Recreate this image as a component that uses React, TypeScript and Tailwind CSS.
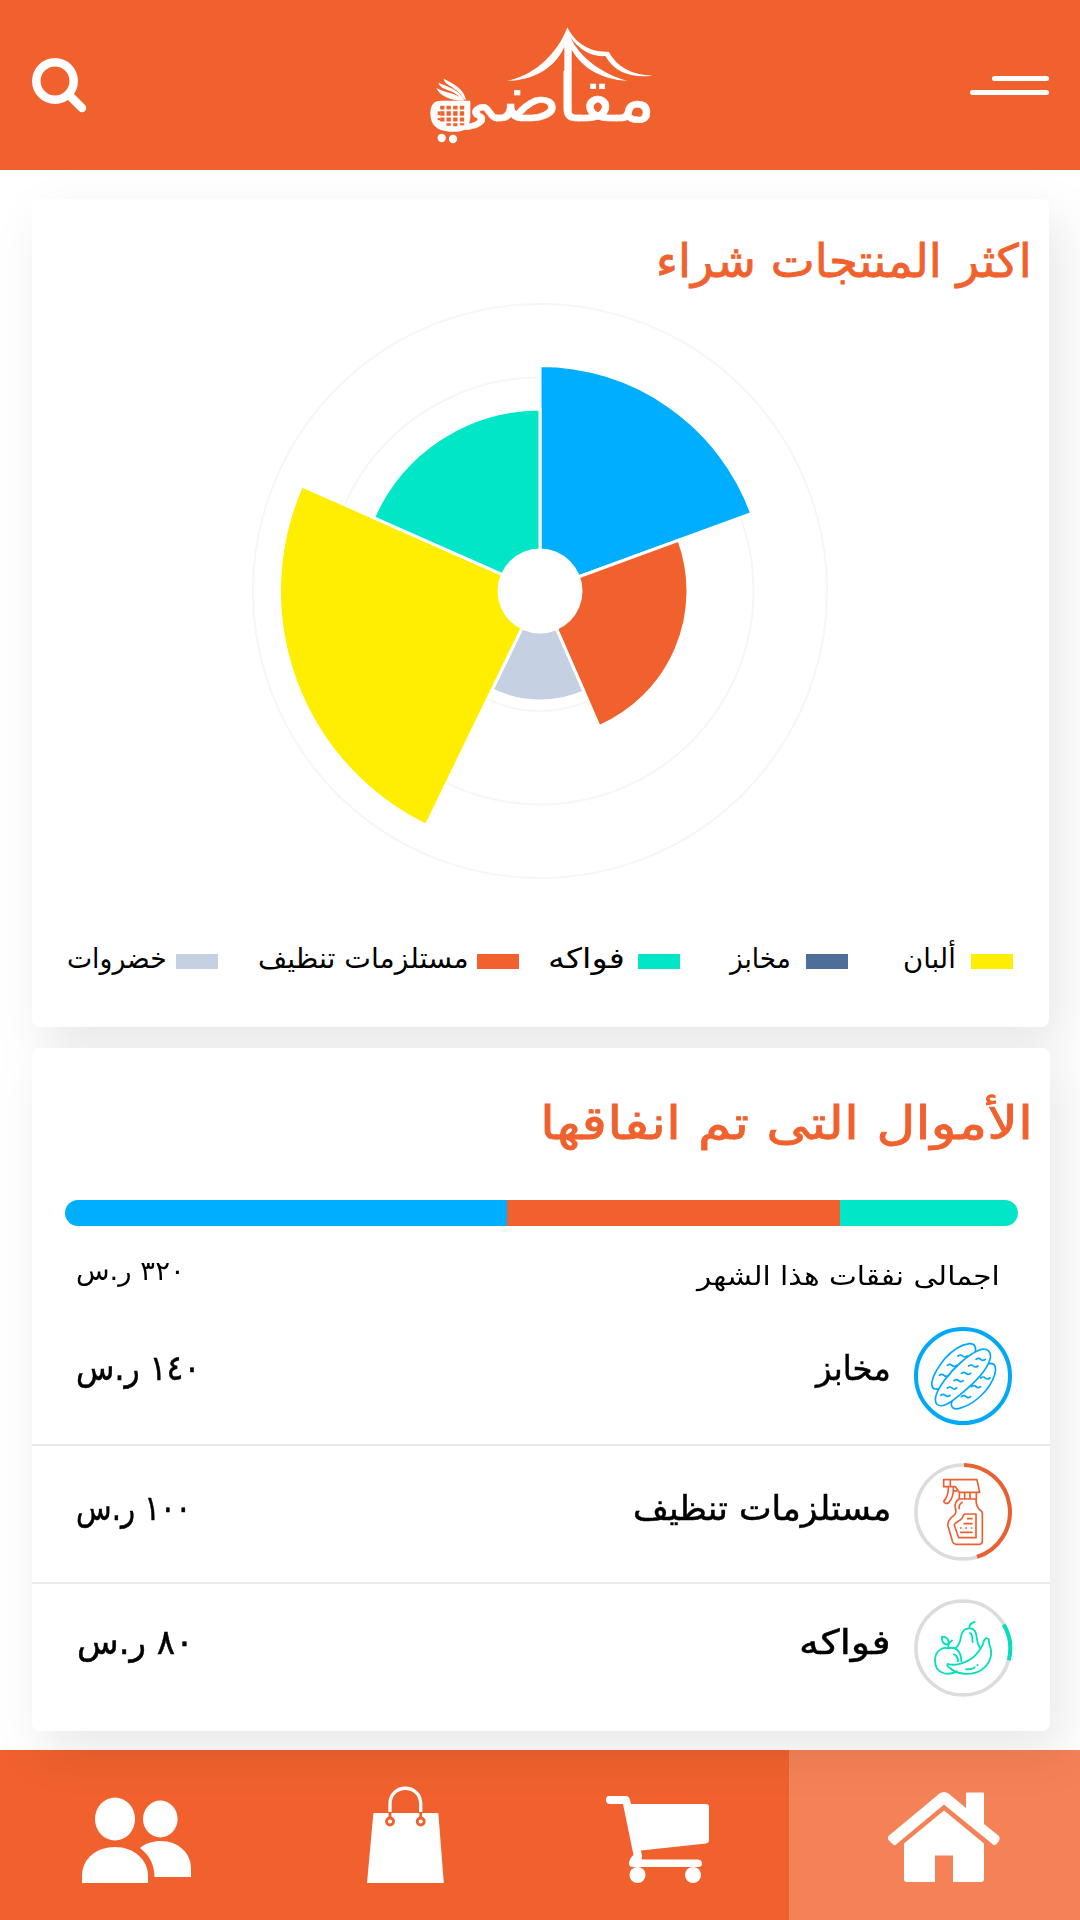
import { useLayoutEffect, useRef, useState, type ReactNode } from "react";

/** One line of Arabic text, condensed or stretched to fill the width of its box. */
function Fit({ children, className = "" }: { children: ReactNode; className?: string }) {
  const box = useRef<HTMLDivElement>(null);
  const line = useRef<HTMLSpanElement>(null);
  const [ratio, setRatio] = useState(1);
  useLayoutEffect(() => {
    if (box.current && line.current && line.current.offsetWidth) {
      setRatio(box.current.clientWidth / line.current.offsetWidth);
    }
  }, [children]);
  return (
    <div ref={box} dir="rtl" className={"shrink-0 " + className}>
      <span
        ref={line}
        className="inline-block origin-right whitespace-nowrap"
        style={{ transform: `scaleX(${ratio})` }}
      >
        {children}
      </span>
    </div>
  );
}

function Logo() {
  return (
    <svg viewBox="0 0 840 510" className="h-[170px] w-[280px]" fill="#fff">
      <path d="M499 82C470 160 402 226 318 243C412 240 468 192 490 140V330L512 340V150C545 205 600 238 680 243C600 222 535 170 508 112C535 150 572 172 613 168C642 218 690 234 755 227C690 224 648 200 623 155C565 158 522 128 499 82Z" />
      <g stroke="#fff" strokeWidth="1.500" className="font-['DejaVu_Sans'] text-[198px]">
        <text x="764" y="363" direction="rtl" textLength="296" lengthAdjust="spacingAndGlyphs">
          مقا
        </text>
        <text x="480" y="363" direction="rtl" textLength="380" lengthAdjust="spacingAndGlyphs">
          ضي
        </text>
      </g>
      <path d="M130 396H215V432H130Z" fill="#f0612e" />
      <path d="M195 301C190 270 165 254 128 236C130 258 165 256 189 298Z" />
      <path d="M190 301C172 268 150 264 112 248C120 274 158 264 184 300Z" />
      <path d="M190 302C168 278 140 282 106 264C118 290 150 302 190 302Z" />
      <path d="M120 302H208V350Q206 395 165 395H145Q88 392 88 340Q88 302 120 302Z" />
      <path d="M124 317V368M143 317V377M163 317V379M183 317V376" fill="none" stroke="#f0612e" strokeWidth="13" />
      <path d="M110 334H117V346H110ZM110 354H117V361H110Z" fill="#f0612e" />
      <path d="M100 331H196M100 350H196M104 367H196" fill="none" stroke="#fff" strokeWidth="5" />
      <circle cx="122" cy="414" r="12.500" />
      <circle cx="156" cy="417" r="12.500" />
    </svg>
  );
}

const CX = 288;
const slices = [
  { from: 0, to: 69.9, r: 225.5, color: "#00aeff" },
  { from: 69.9, to: 156.4, r: 148, color: "#f0612e" },
  { from: 156.4, to: 205.9, r: 110, color: "#c5d1e2" },
  { from: 205.9, to: 293.8, r: 260.5, color: "#ffee00" },
  { from: 293.8, to: 360, r: 182, color: "#02e6c8" },
];

function polar(r: number, deg: number) {
  const a = (deg * Math.PI) / 180;
  return `${(CX + r * Math.sin(a)).toFixed(2)} ${(CX - r * Math.cos(a)).toFixed(2)}`;
}

function RoseChart() {
  return (
    <svg viewBox="0 0 576 576" className="mt-[14px] ml-[220px] block size-[576px]">
      {[120, 213.5, 287].map((r) => (
        <circle key={r} cx={CX} cy={CX} r={r} fill="none" stroke="#f6f6f6" strokeWidth="2" />
      ))}
      {slices.map((s) => (
        <path
          key={s.from}
          d={`M${CX} ${CX}L${polar(s.r, s.from)}A${s.r} ${s.r} 0 0 1 ${polar(s.r, s.to)}Z`}
          fill={s.color}
          stroke="#fff"
          strokeWidth="3"
        />
      ))}
      <circle cx={CX} cy={CX} r="42.500" fill="#fff" />
    </svg>
  );
}

function BreadRing() {
  return (
    <svg viewBox="939 78 300 300" className="size-[100px] shrink-0" fill="#fff" stroke="#00a8fa" strokeWidth="5" strokeLinecap="round" strokeLinejoin="round">
      <circle cx="1089" cy="228" r="141" strokeWidth="12" />
      <path d="M996 258C992 236 1012 204 1034 176C1058 150 1086 134 1108 131C1126 130 1130 144 1124 162C1116 190 1060 244 1024 264C1010 270 998 268 996 258Z" />
      <path d="M1054 312C1056 290 1086 258 1108 236C1130 212 1154 192 1172 190C1186 190 1190 204 1184 224C1170 268 1128 308 1088 322C1070 330 1054 328 1054 312Z" />
      <path d="M1010 312C1000 298 1012 270 1034 240C1062 202 1104 164 1138 150C1162 142 1176 156 1170 178C1160 216 1118 254 1078 286C1056 304 1028 328 1010 312Z" />
      <path fill="none" d="M1074 168q8 -6 14 0t14 0M1042 196q8 -6 14 0t14 0M1018 226q8 -6 14 0t14 0M1128 178q8 -6 14 0t14 0M1106 198q8 -6 14 0t14 0M1084 220q8 -6 14 0t14 0M1062 242q8 -6 14 0t14 0M1042 264q8 -6 14 0t14 0M1022 286q8 -6 14 0t14 0M1142 234q8 -6 14 0t14 0M1114 260q8 -6 14 0t14 0M1084 290q8 -6 14 0t14 0" />
    </svg>
  );
}

function SprayRing() {
  return (
    <svg viewBox="939 486 300 300" className="size-[100px] shrink-0" fill="none" stroke="#eb6030" strokeWidth="5" strokeLinejoin="round">
      <circle cx="1089" cy="636" r="141" stroke="#dcdcdc" strokeWidth="11" />
      <path d="M1092 495A141 141 0 0 1 1131 770.500" strokeWidth="12" />
      <path d="M1031 539H1131L1139 577H1078L1066 560H1031ZM1051 539V560" />
      <path d="M1045 560Q1046 588 1031 604Q1036 614 1046 608Q1062 592 1060 560M1060 572L1072 574" />
      <path d="M1078 577V597H1129V577M1094 579V596M1110 579V596" />
      <path d="M1078 597Q1062 606 1066 624Q1070 636 1064 644Q1040 662 1044 678L1058 726Q1061 733 1068 733H1138Q1147 733 1147 724V640Q1147 634 1140 630Q1128 620 1128 597" />
      <path d="M1078 628Q1074 614 1088 606" />
      <path d="M1094 642H1128V713H1076L1063 676Q1062 672 1068 668Q1088 658 1090 646Z" />
      <path d="M1101 656H1118M1090 671H1118M1080 697H1118" />
      <path d="M1080 684H1085M1096 684H1101M1112 684H1117" />
    </svg>
  );
}

function FruitRing() {
  return (
    <svg viewBox="939 894 300 300" className="size-[100px] shrink-0" fill="none" stroke="#02dfb9" strokeWidth="5.500" strokeLinecap="round" strokeLinejoin="round">
      <circle cx="1089" cy="1044" r="141" stroke="#dcdcdc" strokeWidth="11" />
      <path d="M1211 973.500A141 141 0 0 1 1226.500 1080.500" strokeWidth="12" strokeLinecap="butt" />
      <path d="M1070 1114C1040 1130 1005 1118 1005 1082C1005 1052 1028 1040 1044 1045C1066 1038 1084 1052 1084 1084" />
      <path d="M1045 1044C1044 1036 1048 1026 1056 1022M1046 1034C1030 1034 1024 1024 1026 1010C1040 1010 1048 1018 1046 1034" />
      <path d="M1068 1043C1084 1030 1080 1014 1086 1000C1094 982 1118 980 1126 996C1134 1012 1126 1024 1140 1044M1108 984C1108 974 1114 968 1124 966" />
      <path d="M1110 999C1120 1004 1116 1018 1118 1026" />
      <path d="M1044 1092C1060 1098 1102 1092 1128 1064C1142 1048 1150 1034 1152 1022L1158 1014L1166 1017L1168 1034C1180 1060 1172 1092 1144 1110C1112 1130 1068 1122 1050 1104C1042 1100 1040 1092 1044 1092Z" />
      <path d="M1062 1063C1072 1068 1074 1076 1074 1084M1098 1108C1110 1108 1120 1106 1124 1102M1132 1096L1133 1095" />
    </svg>
  );
}

const legend = [
  { label: "ألبان", swatch: "bg-[#ffee00] w-[42px]", text: "w-[53px] mr-[15px]", gap: "" },
  { label: "مخابز", swatch: "bg-[#4d6e99] w-[42px]", text: "w-[61px] mr-[15px]", gap: "mr-[55px]" },
  { label: "فواكه", swatch: "bg-[#02e6c8] w-[42px]", text: "w-[77px] mr-[13px]", gap: "mr-[50px]" },
  { label: "مستلزمات تنظيف", swatch: "bg-[#f0612e] w-[42px]", text: "w-[211px] mr-[8px]", gap: "mr-[29px]" },
  { label: "خضروات", swatch: "bg-[#c5d1e2] w-[42px]", text: "w-[100px] mr-[9px]", gap: "mr-[40px]" },
];

const rows = [
  {
    label: "مخابز",
    amount: "١٤٠ ر.س",
    icon: <BreadRing />,
    row: "h-[138px] border-b-2",
    name: "w-[75px] pb-[16px]",
    sum: "w-[124px] pb-[16px]",
  },
  {
    label: "مستلزمات تنظيف",
    amount: "١٠٠ ر.س",
    icon: <SprayRing />,
    row: "h-[138px] border-b-2 pb-[4px]",
    name: "w-[258px] pb-[8px]",
    sum: "w-[115px] pb-[8px]",
  },
  {
    label: "فواكه",
    amount: "٨٠ ر.س",
    icon: <FruitRing />,
    row: "h-[147px] pb-[19px]",
    name: "w-[92px] pb-[12px]",
    sum: "w-[117px] pb-[12px]",
  },
];

function Header() {
  return (
    <header className="relative z-20 flex h-[170px] items-center justify-between bg-[#f0612e] pr-[31px] pl-8">
      <svg viewBox="32 45 80 80" className="size-20" fill="none" stroke="#fff">
        <circle cx="55" cy="81" r="18.700" strokeWidth="8.500" />
        <path d="M69 95L82 108" strokeWidth="8.500" strokeLinecap="round" />
      </svg>
      <Logo />
      <div className="flex w-20 flex-col items-end gap-[9px]">
        <span className="h-[5px] w-[57px] rounded-full bg-white" />
        <span className="h-[5px] w-[79px] rounded-full bg-white" />
      </div>
    </header>
  );
}

function BottomNav() {
  return (
    <nav className="flex h-[170px] bg-[#f0612e]">
      <svg viewBox="0 1750 273 170" className="h-full w-[273px]" fill="#fff">
        <ellipse cx="115" cy="1819" rx="20" ry="21.500" />
        <path d="M82 1883V1876C82 1858 97 1847 115 1847C133 1847 148 1859 148 1876V1883Z" />
        <ellipse cx="160.300" cy="1819" rx="17.300" ry="18.500" />
        <path d="M140 1848C146 1843 153 1841 161 1841C178 1841 191 1853 191 1868V1877H154.500C154.500 1864 149 1855 140 1848Z" />
      </svg>
      <svg viewBox="273 1750 264 170" className="h-full w-[264px]" fill="#fff">
        <path d="M374.500 1813H437Q438.300 1813 438.400 1814L443.800 1883H367L373.300 1814Q373.400 1813 374.500 1813Z" />
        <path d="M390 1812V1804C390 1783 420.700 1783 420.700 1804V1812" fill="none" stroke="#fff" strokeWidth="3.300" />
        <g fill="#fff" stroke="#f0612e" strokeWidth="2.800">
          <path d="M390 1812V1818M420.700 1812V1818" />
          <circle cx="390" cy="1821.500" r="3.500" />
          <circle cx="420.700" cy="1821.500" r="3.500" />
        </g>
      </svg>
      <svg viewBox="537 1750 252 170" className="h-full w-[252px]" fill="#fff">
        <path d="M609 1796H626Q629 1796 630 1800L631 1804H706Q709 1804 709 1807V1840Q709 1843 706 1843.500L641 1850.500L642 1856Q641 1859 642 1859.500H698Q702 1860 702 1863.500Q702 1867 698 1867H633Q629 1867 629 1863.500Q629 1859 633.500 1855L623 1804H609Q606 1803 606 1800Q606 1796 609 1796Z" />
        <circle cx="637.500" cy="1875" r="8" />
        <circle cx="693" cy="1875" r="8" />
      </svg>
      <svg viewBox="789 1750 291 170" className="h-full w-[291px] bg-[#f58157]" fill="#fff">
        <path d="M939.500 1793.500Q944 1790.500 948.500 1793.500L966 1808V1793.500Q966 1792.500 967 1792.500H983Q984 1792.500 984 1793.500V1824L999 1836Q1000.500 1838 999 1841L996 1844.500Q994.500 1846 993 1844.500L944 1804.500L896 1844.500Q894.500 1846 893 1844.500L888.500 1840Q887 1838 888.500 1836Z" />
        <path d="M944 1810.500L984 1843.500V1879Q984 1882 981 1882H953V1855.500H935V1882H907Q904 1882 904 1879V1843.500Z" />
      </svg>
    </nav>
  );
}

export default function App() {
  return (
    <div className="flex h-[1920px] w-[1080px] flex-col overflow-hidden bg-white font-['DejaVu_Sans',sans-serif] text-black">
      <Header />
      <main className="relative z-10 flex h-[1580px] flex-col gap-[21px] pt-[29px] pr-[30px] pl-8 drop-shadow-[12px_20px_24px_rgba(0,0,0,0.09)]">
        <section className="h-[828px] w-[1017px] shrink-0 rounded-lg bg-white pt-[34px]">
          <h2 className="flex h-14 justify-end pr-[17px] text-[46px] leading-14 text-[#f0612e] [-webkit-text-stroke:0.8px]">
            <Fit className="w-[376px]">اكثر المنتجات شراء</Fit>
          </h2>
          <RoseChart />
          <ul dir="rtl" className="mt-[62px] flex h-[41px] items-center pr-[36px]">
            {legend.map((item) => (
              <li key={item.label} className={"flex shrink-0 items-center " + item.gap}>
                <span className={"h-[15px] " + item.swatch} />
                <Fit className={"pb-[6px] text-[28px] leading-[41px] " + item.text}>{item.label}</Fit>
              </li>
            ))}
          </ul>
        </section>

        <section className="h-[683px] w-[1018px] shrink-0 rounded-lg bg-white pt-[47px]">
          <h2 className="flex h-14 justify-end pr-[17px] text-[46px] leading-14 text-[#f0612e] [-webkit-text-stroke:0.8px]">
            <Fit className="w-[493px]">الأموال التى تم انفاقها</Fit>
          </h2>
          <div className="mt-[49px] ml-[33px] flex h-[26px] w-[953px] overflow-hidden rounded-full">
            <span className="w-[442px] bg-[#00aeff]" />
            <span className="w-[333px] bg-[#f0612e]" />
            <span className="flex-1 bg-[#02e6c8]" />
          </div>
          <div className="flex h-[82px] items-start justify-between pr-[50px] pl-[44px]">
            <Fit className="mt-[25px] w-[109px] text-[27px] leading-10">٣٢٠ ر.س</Fit>
            <Fit className="mt-[30px] w-[303px] text-[26px] leading-10">اجمالى نفقات هذا الشهر</Fit>
          </div>
          <ul className="[-webkit-text-stroke:0.5px]">
            {rows.map((r) => (
              <li key={r.label} className={"flex items-center border-[#eaeaea] pr-[37px] pl-[44px] " + r.row}>
                <Fit className={"text-[35px] leading-[48px] " + r.sum}>{r.amount}</Fit>
                <div className="flex-1" />
                <Fit className={"mr-[22px] text-[34px] leading-[48px] " + r.name}>{r.label}</Fit>
                {r.icon}
              </li>
            ))}
          </ul>
        </section>
      </main>
      <BottomNav />
    </div>
  );
}
